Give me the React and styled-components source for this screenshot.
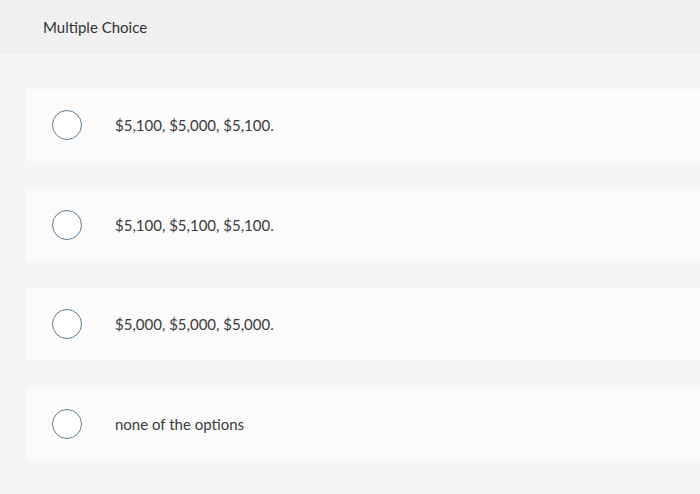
import React from "react";
import styled, { createGlobalStyle } from "styled-components";

const Global = createGlobalStyle`
  html, body { margin: 0; padding: 0; background: #f5f5f5; }
  body { font-family: "Lato", "Open Sans", sans-serif; color: #333; }
`;

const Page = styled.div`
  width: 700px;
  height: 494px;
  overflow: hidden;
  background: #f5f5f5;
`;

const Header = styled.div`
  height: 53px;
  background: #f0f0f0;
  display: flex;
  align-items: center;
  padding-left: 43px;
  padding-bottom: 1px;
  font-size: 15px;
  color: #333;
`;

const List = styled.div`
  display: flex;
  flex-direction: column;
  gap: 27.6px;
  padding: 35px 0 0 26px;
`;

const Card = styled.div`
  height: 72px;
  background: #fbfbfb;
  display: flex;
  align-items: center;
  padding-left: 26px;
  margin-right: -20px;
`;

const Radio = styled.span`
  width: 28px;
  height: 28px;
  border: 1.5px solid #5d7a92;
  border-radius: 50%;
  background: #fff;
  flex: none;
`;

const Label = styled.span`
  margin-left: 33px;
  font-size: 15px;
  color: #3a3a3a;
`;

const options = [
  "$5,100, $5,000, $5,100.",
  "$5,100, $5,100, $5,100.",
  "$5,000, $5,000, $5,000.",
  "none of the options",
];

export default function App() {
  return (
    <Page>
      <Global />
      <Header>Multiple Choice</Header>
      <List>
        {options.map((o) => (
          <Card key={o}>
            <Radio />
            <Label>{o}</Label>
          </Card>
        ))}
      </List>
    </Page>
  );
}
